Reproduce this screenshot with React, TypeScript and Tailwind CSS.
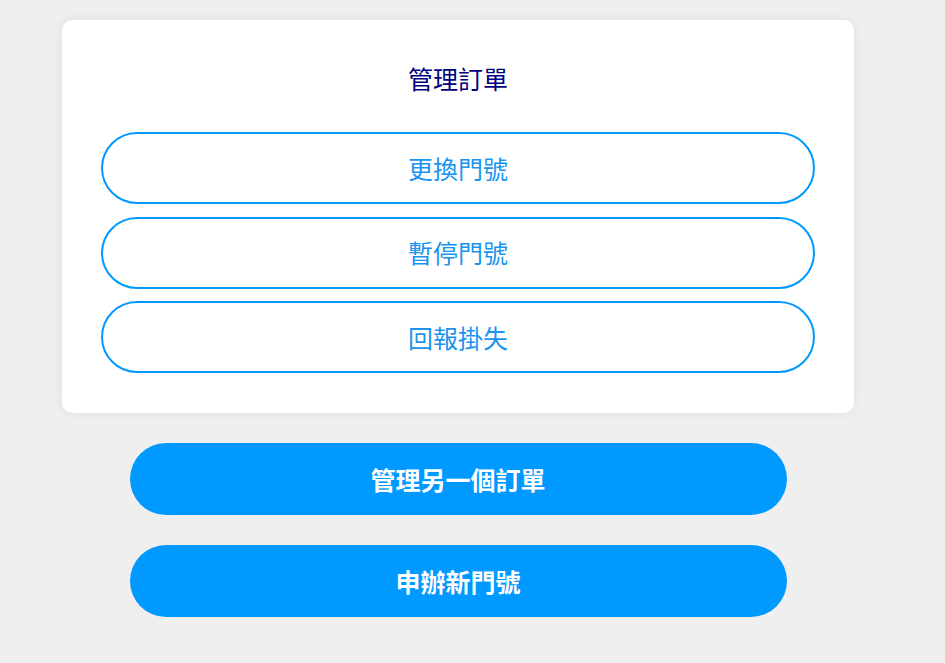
const FONT = "font-['Noto_Sans_CJK_TC','Noto_Sans_CJK_SC',serif]";

function OutlineButton({ label }: { label: string }) {
  return (
    <button className="h-[72px] w-full rounded-full border-2 border-[#0099ff] bg-white text-[25px] leading-none text-[#1a94ee]">
      {label}
    </button>
  );
}

function FilledButton({ label }: { label: string }) {
  return (
    <button className="h-[72px] w-[657px] rounded-full bg-[#0099ff] text-[25px] font-bold leading-none text-white">
      {label}
    </button>
  );
}

export default function App() {
  const actions = ["更換門號", "暫停門號", "回報掛失"];
  return (
    <div className={`min-h-[663px] bg-[#efefef] pt-[20px] ${FONT}`}>
      <div className="ml-[62px] flex w-[792px] flex-col items-center gap-[30px]">
        <div className="w-full rounded-[10px] bg-white px-[39px] pt-[40px] pb-[40px] shadow-[0_0_10px_rgba(0,0,0,0.08)]">
          <h1 className="mb-[36px] text-center text-[25px] leading-[36px] text-[#000080]">管理訂單</h1>
          <div className="flex flex-col gap-[12.5px]">
            {actions.map((a) => (
              <OutlineButton key={a} label={a} />
            ))}
          </div>
        </div>
        <FilledButton label="管理另一個訂單" />
        <FilledButton label="申辦新門號" />
      </div>
    </div>
  );
}
